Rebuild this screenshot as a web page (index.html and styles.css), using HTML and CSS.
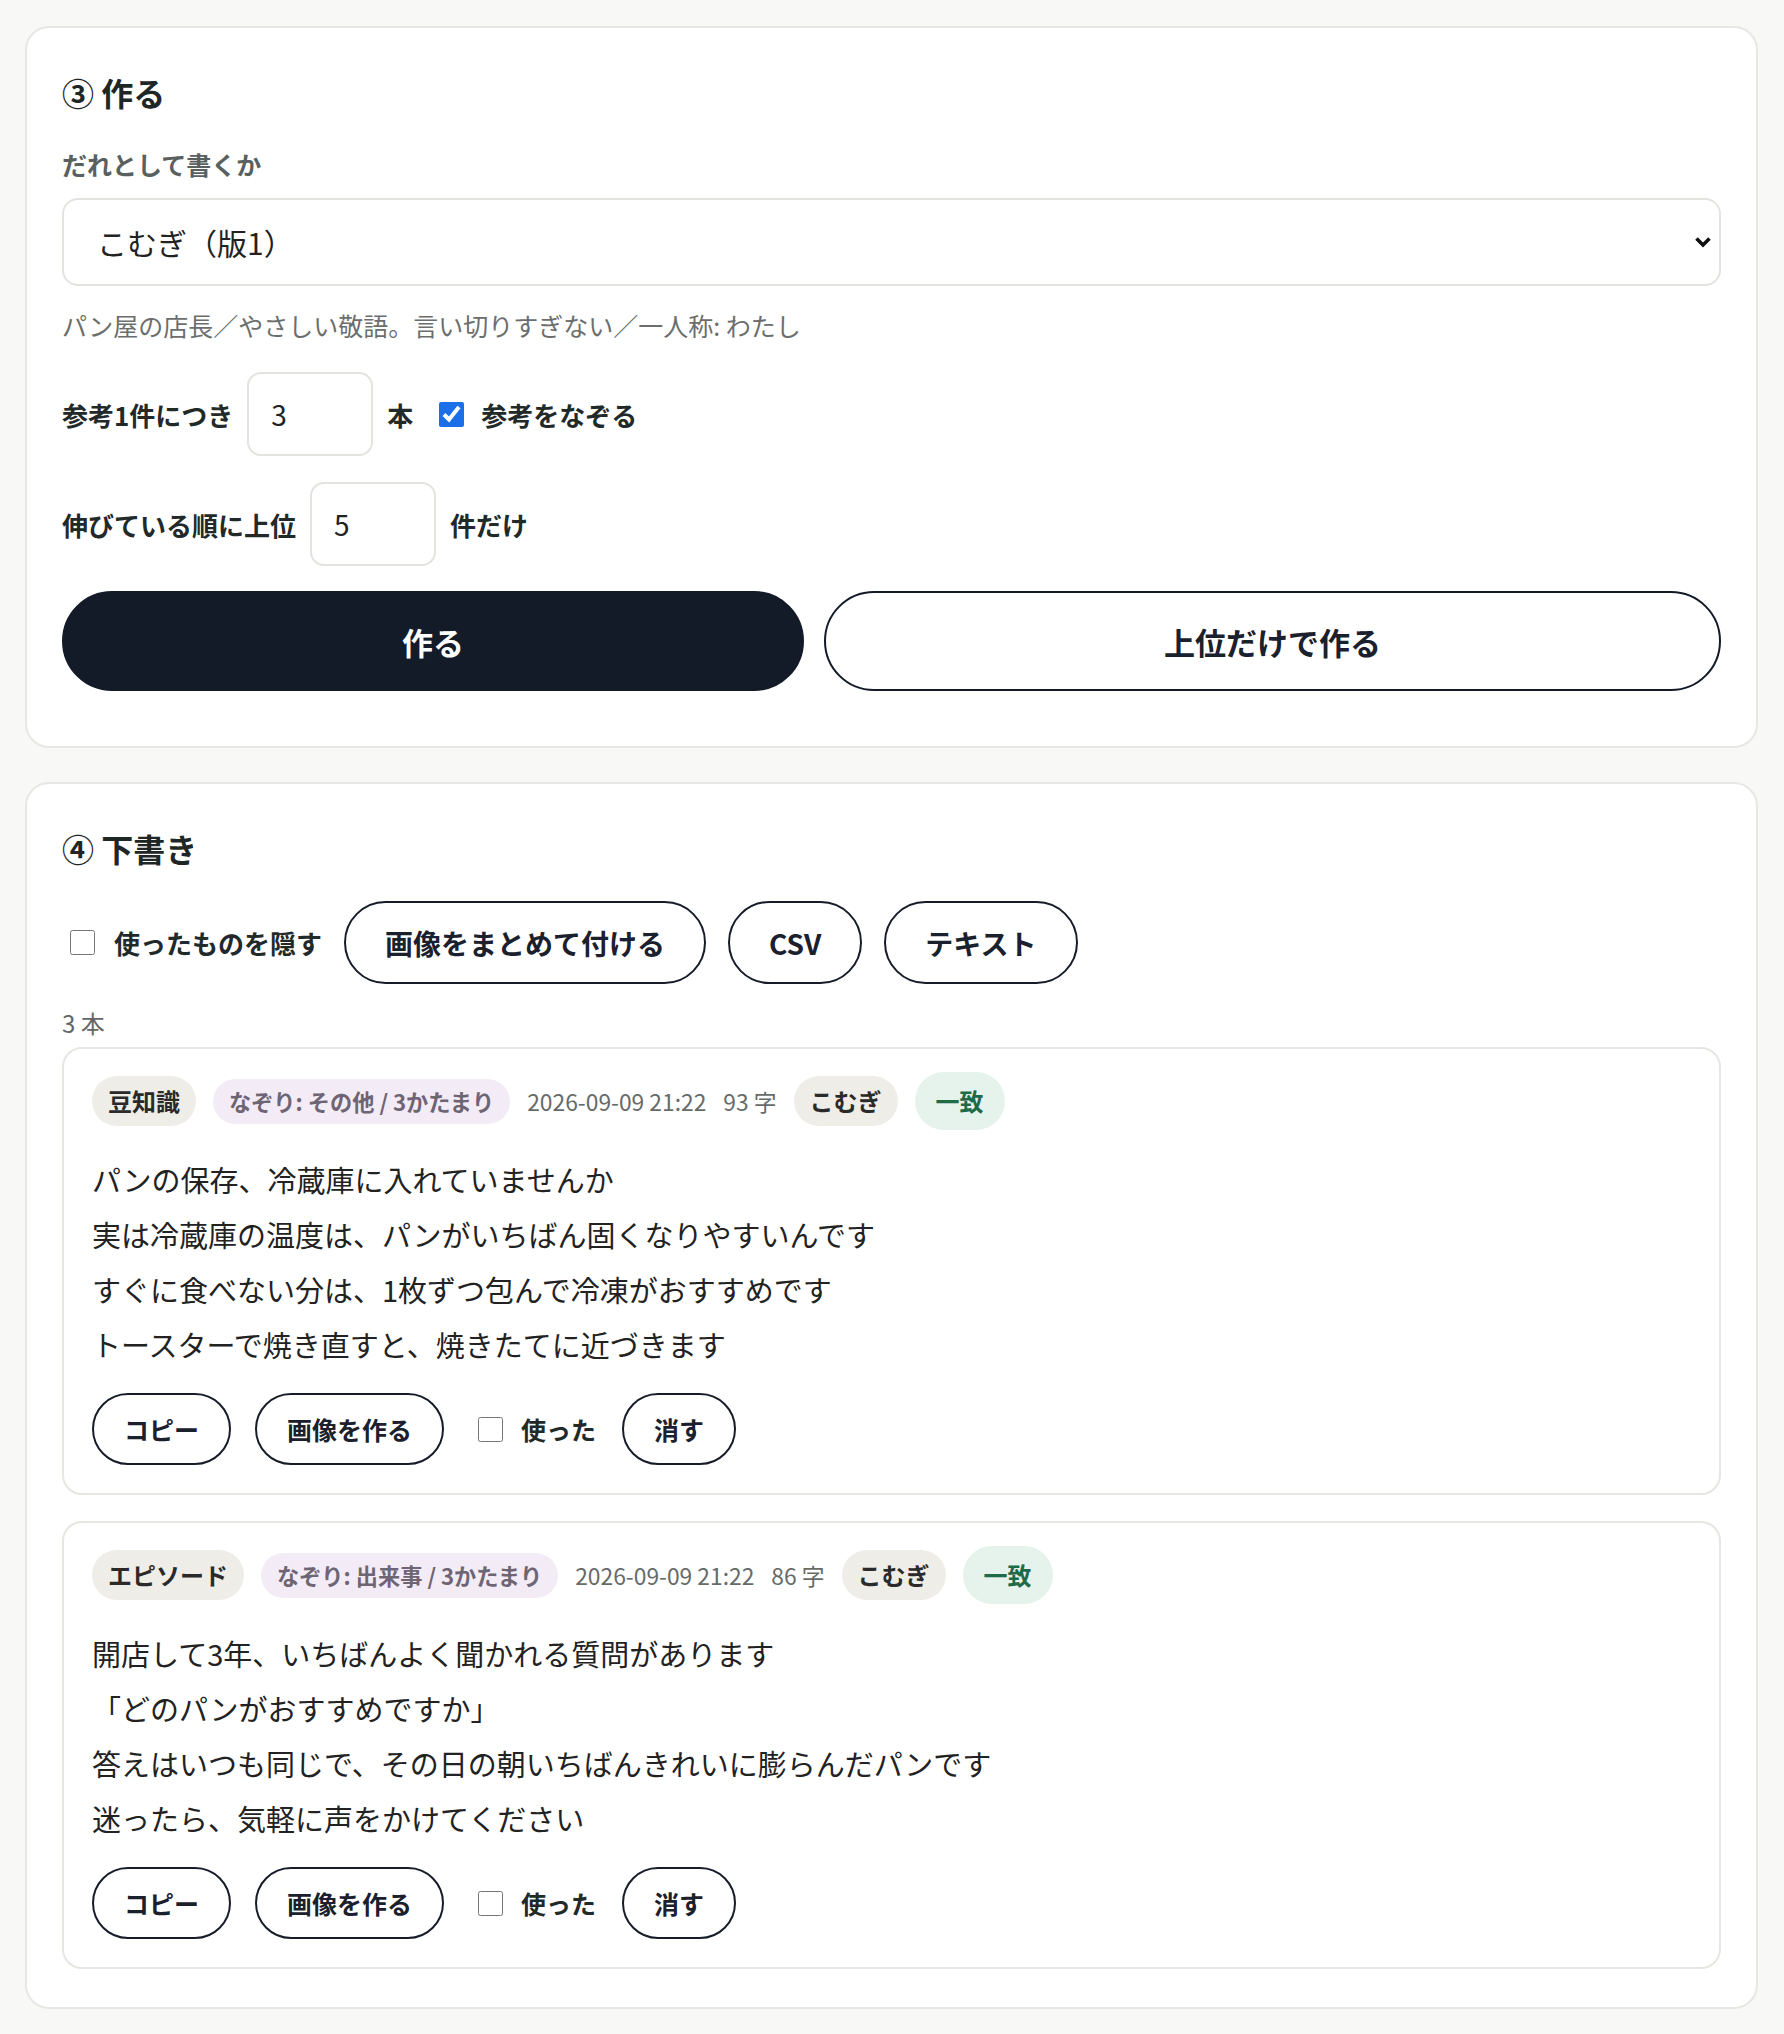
FILE: index.html
```html
<!DOCTYPE html>
<html lang="ja">
<head>
    <meta charset="UTF-8">
    <meta name="viewport" content="width=device-width, initial-scale=1.0">
    <title>投稿の下書き</title>
    <link rel="stylesheet" href="styles.css">
</head>
<body>
    <!-- ③ 作る -->
    <section class="card">
        <h2 class="card-title">③ 作る</h2>

        <label class="field-label" for="persona">だれとして書くか</label>
        <div class="select-wrap">
            <select id="persona" class="select">
                <option>こむぎ（版1）</option>
            </select>
            <svg class="select-arrow" width="18" height="12" viewBox="0 0 18 12">
                <path d="M2.5 2.5 L9 9 L15.5 2.5" fill="none" stroke="#111" stroke-width="3.6"/>
            </svg>
        </div>
        <p class="hint">パン屋の店長／やさしい敬語。言い切りすぎない／一人称: わたし</p>

        <div class="form-row">
            <span class="row-label">参考1件につき</span>
            <input type="number" class="num-input" value="3">
            <span class="row-label">本</span>
            <label class="check-label">
                <input type="checkbox" checked>
                <span>参考をなぞる</span>
            </label>
        </div>

        <div class="form-row">
            <span class="row-label">伸びている順に上位</span>
            <input type="number" class="num-input" value="5">
            <span class="row-label">件だけ</span>
        </div>

        <div class="make-buttons">
            <button class="btn-make primary">作る</button>
            <button class="btn-make">上位だけで作る</button>
        </div>
    </section>

    <!-- ④ 下書き -->
    <section class="card drafts">
        <h2 class="card-title">④ 下書き</h2>

        <div class="toolbar">
            <label class="check-label">
                <input type="checkbox">
                <span>使ったものを隠す</span>
            </label>
            <button class="btn">画像をまとめて付ける</button>
            <button class="btn">CSV</button>
            <button class="btn">テキスト</button>
        </div>

        <p class="count">3 本</p>

        <div class="draft-list">
            <article class="draft">
                <div class="draft-meta">
                    <span class="tag">豆知識</span>
                    <span class="tag trace">なぞり: その他 / 3かたまり</span>
                    <span class="meta-text">2026-09-09 21:22</span>
                    <span class="meta-text">93 字</span>
                    <span class="tag">こむぎ</span>
                    <span class="tag match">一致</span>
                </div>
                <p class="draft-body">パンの保存、冷蔵庫に入れていませんか<br>実は冷蔵庫の温度は、パンがいちばん固くなりやすいんです<br>すぐに食べない分は、1枚ずつ包んで冷凍がおすすめです<br>トースターで焼き直すと、焼きたてに近づきます</p>
                <div class="draft-actions">
                    <button class="btn-sm">コピー</button>
                    <button class="btn-sm">画像を作る</button>
                    <label class="check-label">
                        <input type="checkbox">
                        <span>使った</span>
                    </label>
                    <button class="btn-sm">消す</button>
                </div>
            </article>

            <article class="draft">
                <div class="draft-meta">
                    <span class="tag">エピソード</span>
                    <span class="tag trace">なぞり: 出来事 / 3かたまり</span>
                    <span class="meta-text">2026-09-09 21:22</span>
                    <span class="meta-text">86 字</span>
                    <span class="tag">こむぎ</span>
                    <span class="tag match">一致</span>
                </div>
                <p class="draft-body">開店して3年、いちばんよく聞かれる質問があります<br>「どのパンがおすすめですか」<br>答えはいつも同じで、その日の朝いちばんきれいに膨らんだパンです<br>迷ったら、気軽に声をかけてください</p>
                <div class="draft-actions">
                    <button class="btn-sm">コピー</button>
                    <button class="btn-sm">画像を作る</button>
                    <label class="check-label">
                        <input type="checkbox">
                        <span>使った</span>
                    </label>
                    <button class="btn-sm">消す</button>
                </div>
            </article>
        </div>
    </section>
</body>
</html>
```

FILE: styles.css
```css
* {
    margin: 0;
    padding: 0;
    box-sizing: border-box;
}

body {
    font-family: "Noto Sans CJK JP", "Noto Sans", sans-serif;
    background-color: #f8f8f6;
    color: #222;
    padding: 26px 26px 24px 25px;
}

button,
input,
select {
    font-family: inherit;
}

.card {
    background-color: #fff;
    border: 2px solid #e7e7e4;
    border-radius: 24px;
    padding: 42px 35px 55px;
}

.card + .card {
    margin-top: 34px;
}

.card.drafts {
    padding-bottom: 38px;
}

.card-title {
    font-size: 32px;
    line-height: 44px;
    font-weight: 700;
    color: #1f2726;
}

.field-label {
    display: block;
    margin-top: 31px;
    font-size: 25px;
    line-height: 38px;
    font-weight: 700;
    color: #58615f;
}

.select-wrap {
    position: relative;
    margin-top: 15px;
}

.select {
    display: block;
    width: 100%;
    height: 88px;
    appearance: none;
    background-color: #fff;
    border: 2px solid #e3e3e0;
    border-radius: 16px;
    padding: 0 60px 0 33px;
    font-size: 30px;
    color: #222;
}

.select-arrow {
    position: absolute;
    right: 9px;
    top: 50%;
    transform: translateY(-50%);
    pointer-events: none;
}

.hint {
    margin-top: 20px;
    font-size: 25px;
    line-height: 38px;
    color: #6b6e6d;
}

.form-row {
    display: flex;
    align-items: center;
    gap: 14px;
    margin-top: 28px;
}

.form-row + .form-row {
    margin-top: 26px;
}

.row-label {
    font-size: 26px;
    font-weight: 700;
    color: #222a29;
}

.num-input {
    width: 126px;
    height: 84px;
    border: 2px solid #e3e3e0;
    border-radius: 14px;
    padding: 0 22px;
    font-size: 28px;
    color: #222;
    background-color: #fff;
}

.check-label {
    display: inline-flex;
    align-items: center;
    gap: 17px;
    font-size: 26px;
    font-weight: 700;
    color: #222a29;
}

.check-label input {
    width: 25px;
    height: 25px;
    margin: 0;
    accent-color: #1b6fe8;
}

.form-row .check-label {
    margin-left: 12px;
}

.make-buttons {
    display: flex;
    gap: 20px;
    margin-top: 25px;
}

.btn-make {
    flex: 1 1 auto;
    height: 100px;
    padding: 0 20px;
    border: 2px solid #131a28;
    border-radius: 999px;
    background-color: #fff;
    color: #1a202c;
    font-size: 31px;
    font-weight: 700;
    cursor: pointer;
}

.btn-make.primary {
    background-color: #131a28;
    color: #fff;
}

/* 下書き */
.toolbar {
    display: flex;
    align-items: center;
    gap: 22px;
    margin-top: 31px;
}

.toolbar .check-label {
    margin-left: 8px;
    gap: 19px;
}

.btn,
.btn-sm {
    display: inline-flex;
    align-items: center;
    justify-content: center;
    border: 2px solid #161c29;
    border-radius: 999px;
    background-color: #fff;
    color: #1a202c;
    font-weight: 700;
    cursor: pointer;
}

.btn {
    height: 83px;
    padding: 0 39px;
    font-size: 28px;
}

.btn-sm {
    height: 72px;
    padding: 0 30px;
    font-size: 25px;
}

.count {
    margin-top: 20px;
    font-size: 24px;
    line-height: 38px;
    color: #666;
}

.draft-list {
    display: flex;
    flex-direction: column;
    gap: 26px;
    margin-top: 5px;
}

.draft {
    border: 2px solid #e6e6e3;
    border-radius: 20px;
    padding: 23px 28px 28px;
}

.draft-meta {
    display: flex;
    flex-wrap: wrap;
    align-items: center;
    gap: 17px;
}

.tag {
    font-size: 24px;
    line-height: 34px;
    padding: 8px 16px;
    border-radius: 999px;
    background-color: #efede8;
    color: #2a2a2a;
    font-weight: 700;
}

.tag.trace {
    font-size: 22.2px;
    line-height: 33px;
    padding: 6px 16px;
    background-color: #f3ebf6;
    color: #6d6573;
}

.tag.match {
    padding: 12px 21px;
    background-color: #e5f3ec;
    color: #1f6b48;
}

.meta-text {
    font-size: 22.8px;
    color: #666b6a;
}

.draft-body {
    margin-top: 22px;
    font-size: 29px;
    line-height: 55px;
    color: #222;
}

.draft-actions {
    display: flex;
    align-items: center;
    gap: 24px;
    margin-top: 21px;
}

.draft-actions .check-label {
    margin-left: 10px;
    margin-right: 2px;
    gap: 18px;
    font-size: 25px;
}
```
